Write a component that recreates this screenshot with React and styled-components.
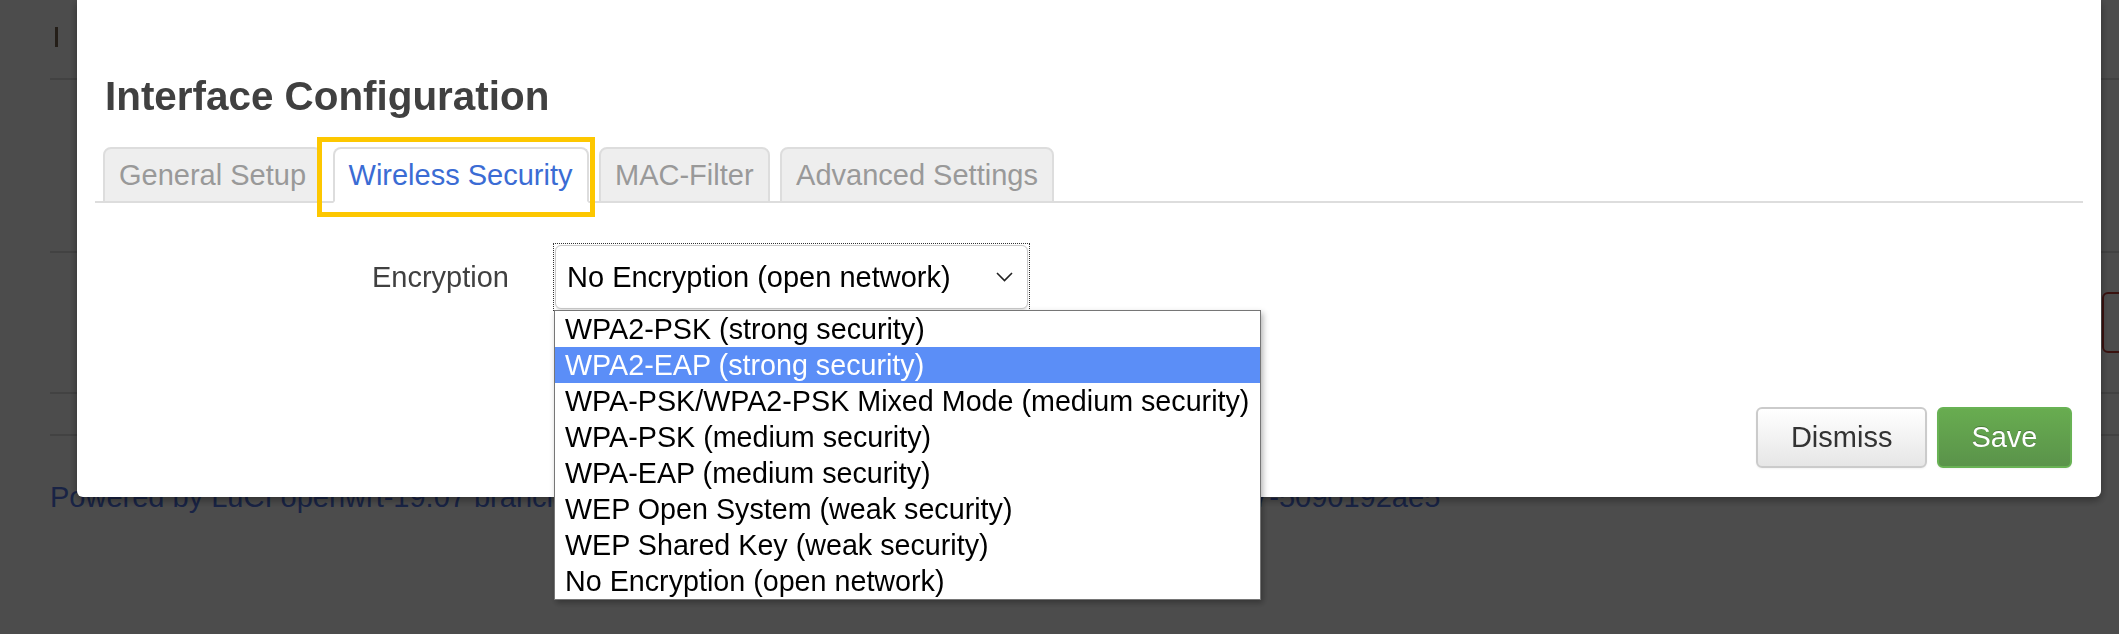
import React from 'react';
import styled, { createGlobalStyle } from 'styled-components';

const Global = createGlobalStyle`
  html, body {
    margin: 0;
    padding: 0;
    width: 2119px;
    height: 634px;
    overflow: hidden;
    background: #fff;
  }
  body {
    font-family: "Liberation Sans", Arial, Helvetica, sans-serif;
  }
  * { box-sizing: border-box; }
`;

/* ---------- underlying page (dimmed by the backdrop) ---------- */
const Page = styled.div`
  width: 2119px;
  height: 634px;
  padding-left: 50px;
  color: #404040;
  overflow: hidden;
`;

const PageHeader = styled.div`
  height: 80px;
  border-bottom: 2px solid #ddd;
  padding: 27px 0 0 5px;
`;

const PageHeading = styled.div`
  height: 20px;
  border-left: 3px solid #7a6450;
  padding-left: 40px;
  font-size: 24px;
  line-height: 20px;
  font-weight: bold;
  color: #000;
  white-space: nowrap;
`;

const PageSpacer = styled.div`
  height: ${(p) => p.h}px;
`;

const PageRow = styled.div`
  height: 143px;
  border-top: 2px solid #ddd;
  border-bottom: 2px solid #ddd;
  display: flex;
  justify-content: flex-end;
  align-items: center;
`;

const RemoveBtn = styled.div`
  flex: none;
  width: 140px;
  height: 61px;
  margin-right: -123px;
  border: 2px solid #c43c35;
  border-radius: 6px;
`;

const PageLine = styled.div`
  border-top: 2px solid #ddd;
`;

const PageFooter = styled.div`
  padding-top: 46px;
  font-size: 29px;
  line-height: 30px;
  color: #5477e6;
  white-space: nowrap;
`;

/* ---------- backdrop + modal ---------- */
const Backdrop = styled.div`
  position: fixed;
  inset: 0;
  background: rgba(0, 0, 0, 0.7);
`;

const Modal = styled.div`
  position: fixed;
  left: 77px;
  top: 0;
  width: 2024px;
  height: 497px;
  background: #fff;
  border-radius: 0 0 6px 6px;
  box-shadow: 0 3px 9px rgba(0, 0, 0, 0.4);
  padding: 0 18px;
  display: flex;
  flex-direction: column;
`;

const Title = styled.h4`
  margin: 72px 0 0 10px;
  font-size: 40.4px;
  line-height: 48px;
  font-weight: bold;
  color: #404040;
`;

const TabBar = styled.ul`
  list-style: none;
  margin: 27px 0 0;
  padding: 0 0 0 8px;
  display: flex;
  gap: 10.5px;
  border-bottom: 2px solid #ddd;
  position: relative;
`;

const Tab = styled.li`
  position: relative;
  height: 56px;
  margin-bottom: -2px;
  padding: 0 14px;
  display: flex;
  align-items: center;
  font-size: 29px;
  border: 2px solid #ddd;
  border-bottom-color: ${(p) => (p.$active ? '#fff' : '#ddd')};
  border-radius: 8px 8px 0 0;
  background: ${(p) => (p.$active ? '#fff' : '#eee')};
  color: ${(p) => (p.$active ? '#3b6cd4' : '#999')};
  white-space: nowrap;
`;

const Highlight = styled.span`
  position: absolute;
  left: -18px;
  top: -12px;
  width: 278px;
  height: 80px;
  border: 5px solid #fdc700;
  pointer-events: none;
`;

const FormRow = styled.div`
  margin-top: 40px;
  display: grid;
  grid-template-columns: 414px 477px;
  column-gap: 44px;
  align-items: center;
`;

const Label = styled.label`
  text-align: right;
  font-size: 29px;
  color: #404040;
`;

const SelectWrap = styled.div`
  position: relative;
  padding: 1px;
  border: 1px dotted #333;
`;

const SelectBox = styled.div`
  height: 64px;
  border: 1px solid #c8c8c8;
  border-radius: 6px;
  padding: 0 14px 0 11px;
  display: flex;
  align-items: center;
  justify-content: space-between;
  font-size: 29px;
  color: #000;
  background: #fff;
  box-shadow: 0 1px 2px rgba(0, 0, 0, 0.12);
`;

const OptionList = styled.ul`
  position: absolute;
  left: 0;
  top: 100%;
  width: 707px;
  margin: 0;
  padding: 0;
  list-style: none;
  background: #fff;
  border: 1px solid #767676;
  box-shadow: 2px 3px 6px rgba(0, 0, 0, 0.3);
  z-index: 5;
`;

const Option = styled.li`
  height: 36px;
  line-height: 36px;
  padding-left: 10px;
  font-size: 28.7px;
  white-space: nowrap;
  color: ${(p) => (p.$selected ? '#fff' : '#000')};
  background: ${(p) => (p.$selected ? '#5b8ef7' : 'transparent')};
`;

const Footer = styled.div`
  margin-top: auto;
  padding: 0 11px 29px 0;
  display: flex;
  justify-content: flex-end;
  gap: 10px;
`;

const Button = styled.button`
  height: 61px;
  padding: 0 32.5px;
  font-family: inherit;
  font-size: 29px;
  border-radius: 6px;
  border: 2px solid ${(p) => (p.$primary ? '#68b254' : '#cbcbcb')};
  color: ${(p) => (p.$primary ? '#fff' : '#333')};
  background: ${(p) =>
    p.$primary
      ? 'linear-gradient(#68ac50, #5a934a)'
      : 'linear-gradient(#ffffff, #e6e6e6)'};
  text-shadow: ${(p) => (p.$primary ? '0 -1px 0 rgba(0,0,0,0.25)' : 'none')};
  box-shadow: 0 1px 2px rgba(0, 0, 0, 0.05);
`;

const options = [
  'WPA2-PSK (strong security)',
  'WPA2-EAP (strong security)',
  'WPA-PSK/WPA2-PSK Mixed Mode (medium security)',
  'WPA-PSK (medium security)',
  'WPA-EAP (medium security)',
  'WEP Open System (weak security)',
  'WEP Shared Key (weak security)',
  'No Encryption (open network)',
];

const tabs = ['General Setup', 'Wireless Security', 'MAC-Filter', 'Advanced Settings'];

const Chevron = () => (
  <svg width="17" height="10" viewBox="0 0 17 10" fill="none">
    <polyline points="1,1 8.5,8.5 16,1" stroke="#222" strokeWidth="1.6" />
  </svg>
);

export default function App() {
  return (
    <>
      <Global />
      <Page>
        <PageHeader>
          <PageHeading>Wireless Overview</PageHeading>
        </PageHeader>
        <PageSpacer h={171} />
        <PageRow>
          <RemoveBtn />
        </PageRow>
        <PageSpacer h={40} />
        <PageLine />
        <PageFooter>
          Powered by LuCI openwrt-19.07 branch (git-21.231.26241-422c175) / OpenWrt 19.07.7 r11307-5090192ae5
        </PageFooter>
      </Page>
      <Backdrop />
      <Modal>
        <Title>Interface Configuration</Title>
        <TabBar>
          {tabs.map((t, i) => (
            <Tab key={t} $active={i === 1}>
              {t}
              {i === 1 && <Highlight />}
            </Tab>
          ))}
        </TabBar>
        <FormRow>
          <Label>Encryption</Label>
          <SelectWrap>
            <SelectBox>
              <span>No Encryption (open network)</span>
              <Chevron />
            </SelectBox>
            <OptionList>
              {options.map((o, i) => (
                <Option key={o} $selected={i === 1}>
                  {o}
                </Option>
              ))}
            </OptionList>
          </SelectWrap>
        </FormRow>
        <Footer>
          <Button>Dismiss</Button>
          <Button $primary>Save</Button>
        </Footer>
      </Modal>
    </>
  );
}
